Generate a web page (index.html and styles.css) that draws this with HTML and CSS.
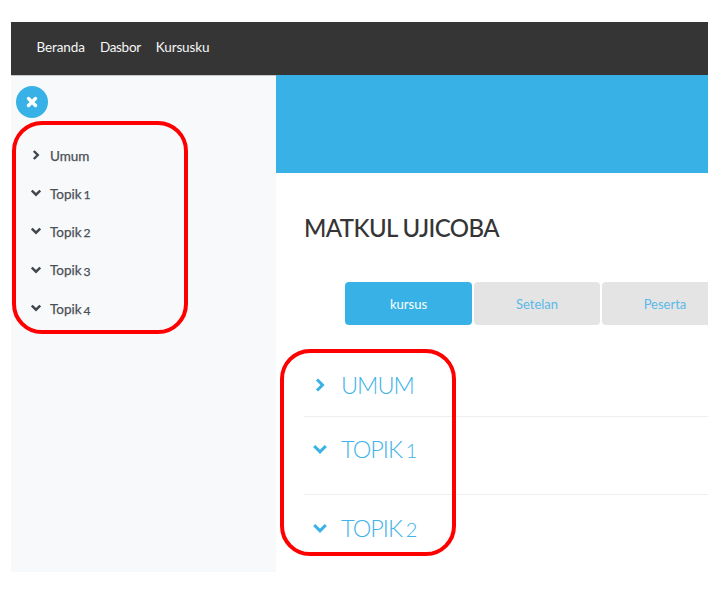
FILE: index.html
```html
<!DOCTYPE html>
<html lang="id">
<head>
<meta charset="utf-8">
<title>Matkul Ujicoba</title>
<link rel="stylesheet" href="styles.css">
</head>
<body>
<div class="frame">
  <nav class="topnav">
    <a>Beranda</a><a>Dasbor</a><a>Kursusku</a>
  </nav>
  <div class="body">
    <aside class="side">
      <button class="close" aria-label="Tutup">
        <svg width="12" height="12" viewBox="0 0 12 12"><path d="M2.500 2.500l7 7M9.500 2.500l-7 7" fill="none" stroke="#fff" stroke-width="3.400" stroke-linecap="round"/></svg>
      </button>
      <ul class="toc">
        <li><svg class="ic" viewBox="0 0 10 10"><path d="M2.800 1L6.800 5 2.800 9"/></svg><span>Umum</span></li>
        <li><svg class="ic" viewBox="0 0 10 10"><path d="M.8 2.500L5 6.700 9.200 2.500"/></svg><span>Topik <span class="num">1</span></span></li>
        <li><svg class="ic" viewBox="0 0 10 10"><path d="M.8 2.500L5 6.700 9.200 2.500"/></svg><span>Topik <span class="num">2</span></span></li>
        <li><svg class="ic" viewBox="0 0 10 10"><path d="M.8 2.500L5 6.700 9.200 2.500"/></svg><span>Topik <span class="num low">3</span></span></li>
        <li><svg class="ic" viewBox="0 0 10 10"><path d="M.8 2.500L5 6.700 9.200 2.500"/></svg><span>Topik <span class="num low">4</span></span></li>
      </ul>
    </aside>
    <main class="main">
      <div class="hero"></div>
      <div class="content">
        <h1>MATKUL UJICOBA</h1>
        <div class="tabs">
          <a class="tab active">kursus</a><a class="tab">Setelan</a><a class="tab">Peserta</a>
        </div>
        <section class="sec sec-a"><svg class="ic2" viewBox="0 0 14 14"><path d="M4 1.500L9.500 7 4 12.500"/></svg><span>UMUM</span></section>
        <section class="sec sec-b"><svg class="ic2" viewBox="0 0 14 14"><path d="M1.200 4L7 9.800 12.800 4"/></svg><span>TOPIK <span class="num">1</span></span></section>
        <section class="sec sec-c"><svg class="ic2" viewBox="0 0 14 14"><path d="M1.200 4L7 9.800 12.800 4"/></svg><span>TOPIK <span class="num">2</span></span></section>
      </div>
    </main>
  </div>
</div>
<div class="mark mark-side"></div>
<div class="mark mark-main"></div>
</body>
</html>
```

FILE: styles.css
```css
html, body { margin: 0; padding: 0; background: #fff; }
body { font-family: "Lato", "Open Sans", sans-serif; width: 723px; height: 592px; overflow: hidden; position: relative; }
.frame { margin: 22px 15px 0 11px; width: 697px; height: 550px; display: flex; flex-direction: column; overflow: hidden; }
.topnav { height: 53px; background: #353535; display: flex; align-items: center; gap: 15px; padding: 0 0 3px 25.500px; color: #f6f6f6; font-size: 13.500px; letter-spacing: -0.100px; box-sizing: border-box; flex: none; }
.topnav a:nth-child(2) { letter-spacing: -0.300px; }
.topnav a:nth-child(3) { letter-spacing: -0.150px; }
.body { display: flex; flex: 1; min-height: 0; }
.side { width: 265px; background: #f8f9fb; flex: none; border-top: 1px solid #c9c9c9; box-sizing: border-box; padding: 10px 0 0 5px; }
.close { width: 32px; height: 32px; border: 0; border-radius: 50%; background: #38b2e6; padding: 0; display: flex; align-items: center; justify-content: center; }
.toc { list-style: none; margin: 18.500px 0 0; padding: 0 0 0 14.500px; color: #4a4f55; font-size: 13.500px; font-weight: 400; -webkit-text-stroke: 0.25px #4a4f55; }
.toc li { height: 38.400px; display: flex; align-items: center; gap: 9.500px; word-spacing: -1.500px; }
.num { font-size: 0.9em; }
.num.low { vertical-align: -1px; }
.ic { width: 10px; height: 10px; fill: none; stroke: #41464c; stroke-width: 2.400; flex: none; position: relative; top: -1px; }
.main { flex: 1; min-width: 0; }
.hero { height: 98px; background: #38b2e6; }
.content { padding: 0 0 0 28px; }
h1 { margin: 40px 0 0; font-size: 24px; line-height: 30px; font-weight: 500; color: #353535; letter-spacing: -0.600px; }
.tabs { display: flex; gap: 2px; margin: 39px 0 0 41px; }
.tab { width: 126px; height: 43px; flex: none; display: flex; align-items: center; justify-content: center; background: #e4e4e4; color: #5ab9e8; font-size: 13px; border-radius: 4px; }
.tab:last-child { border-radius: 4px 0 0 4px; }
.tab.active { background: #38b2e6; color: #fff; width: 127px; }
.sec { display: flex; align-items: center; gap: 14px; padding-left: 9px; color: #42b3e8; font-size: 23.500px; font-weight: 300; letter-spacing: -1px; word-spacing: -1.500px; box-sizing: border-box; }
.sec .num { font-size: 0.85em; }
.sec-a { height: 92px; border-bottom: 1px solid #eeeeee; padding-top: 28px; }
.sec-b { height: 78px; border-bottom: 1px solid #eeeeee; padding-bottom: 14px; }
.sec-c { height: 67px; padding-bottom: 1px; }
.ic2 { width: 14px; height: 14px; fill: none; stroke: #38b2e6; stroke-width: 3; flex: none; }
.mark { position: absolute; box-sizing: border-box; border: 4.500px solid #ff0000; border-radius: 30px; }
.mark-side { left: 12px; top: 121px; width: 176px; height: 213px; }
.mark-main { left: 280px; top: 349px; width: 176px; height: 207px; }
```
